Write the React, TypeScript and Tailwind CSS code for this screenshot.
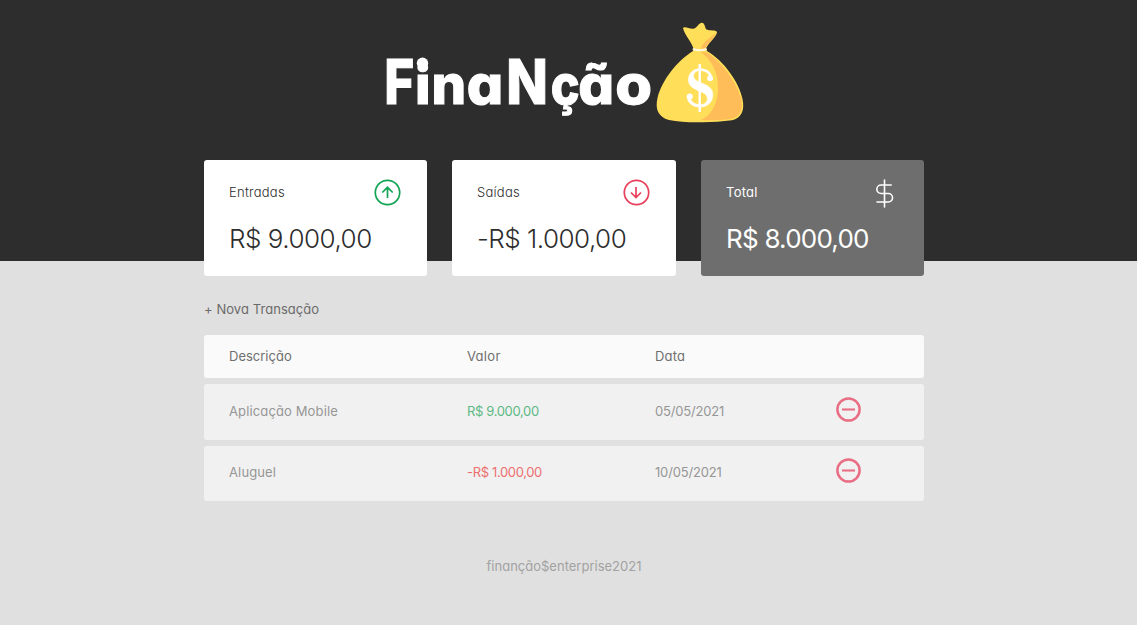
import type { ReactNode } from "react";

const letters = [
  { char: "F", x: 384.3, size: 62.5, stretch: 0.82 },
  { char: "i", x: 415, size: 54, stretch: 1.02 },
  { char: "n", x: 431.6, size: 54, stretch: 1.01 },
  { char: "a", x: 466.8, size: 54, stretch: 1.06 },
  { char: "N", x: 506.2, size: 62.5, stretch: 0.87 },
  { char: "ç", x: 550.8, size: 54, stretch: 0.9 },
  { char: "ã", x: 578.3, size: 54, stretch: 1.04 },
  { char: "o", x: 615.3, size: 54, stretch: 1.1 },
];

function Logo() {
  return (
    <svg width="372" height="110" viewBox="380 17 372 110" className="block" role="img" aria-label="FinaNção">
      <g className="font-[Inter] font-extrabold [font-feature-settings:'cv11','ss03']" fill="#fff" stroke="#fff" strokeWidth="1">
        {letters.map((l) => (
          <text key={l.char} fontSize={l.size} transform={`translate(${l.x} 103.700) scale(${l.stretch} 1)`}>{l.char}</text>
        ))}
      </g>
      <circle cx="422.500" cy="63.300" r="5.700" fill="#fff" />
      <path d="M683 28C684.500 25.800 689 29 693 28.800C697 28.500 698.500 22.800 702 22.800C704.500 22.800 705 27 706 29.300C709 31.200 717 29.500 717 32.500C715.500 38 709 42 706 48.500L707 51C724 61 739 82 742.500 99C745 111 741 118 732 120.200Q716 122.500 700 122.300Q682 122.500 669 120C658 117 655 109 657.500 98C662 80 677 61 693 51L693.500 48.500C691 41 684.500 35 683 28Z" fill="#ffde59" />
      <path d="M716.500 33C714 39 708 42 705.500 48.500L701 48.500C703 41 711 37 716.500 33Z" fill="#ffbd59" />
      <path d="M700 51.500L707 52.500C723 63 737.500 84 741.200 99C743.500 110 740 117 731 119Q716 121 701 120C711 116 717.500 103 718 90C718.500 72 712 60 700 51.500Z" fill="#ffbd59" />
      <path d="M693.500 49.300Q700 51.300 706 49.300" fill="none" stroke="#fff8e5" strokeWidth="2" strokeLinecap="round" />
      <path d="M699.700 64V112" stroke="#fff" strokeWidth="2.400" />
      <path d="M712.500 80H709.800C710 73 705.500 70.600 700 70.600C696 70.600 693.500 73 693.500 76C693.500 84.500 712.800 82 712.800 94.500C712.800 102.500 707 107 700 107C692 107 687.500 102.500 687 96H690C690 101 694 104.700 700 104.700C705 104.700 707.500 102 707.500 98.500C707.500 89.500 688.500 92 688.500 80C688.500 73 693.500 68.700 700 68.700C707.500 68.700 712 72.500 712.500 80Z" fill="#fff" stroke="#fff" strokeWidth="0.700" />
      <circle cx="710" cy="78.300" r="2.800" fill="#fff" />
      <circle cx="689.800" cy="96.500" r="3" fill="#fff" />
    </svg>
  );
}

function ArrowIcon({ down = false }: { down?: boolean }) {
  return (
    <svg width="27" height="27" viewBox="0 0 27 27" fill="none" stroke={down ? "#e83f5b" : "#12a454"} strokeWidth="1.700" className="-mt-[1px]">
      <circle cx="13.500" cy="13.500" r="12.200" />
      <path strokeWidth="1.700" d={down ? "M13 8V18.500M8 13.500L13 18.500L18 13.500" : "M13.500 19V8.500M8.300 13.500L13.500 8.300L18.700 13.500"} />
    </svg>
  );
}

function DollarIcon() {
  return (
    <svg width="27" height="29" viewBox="0 0 27 29" fill="none" stroke="#fff" strokeWidth="1.600" strokeLinecap="round" strokeLinejoin="round">
      <path d="M13.500 1V28M20.200 6H10.100A4.200 4.200 0 0 0 10.100 14.500H17.300A4.200 4.200 0 0 1 17.300 23H6" />
    </svg>
  );
}

function MinusIcon() {
  return (
    <svg width="25" height="25" viewBox="0 0 25 25" fill="none" stroke="#e96e84" className="-mt-[5px]">
      <circle cx="12.500" cy="12.500" r="11.100" strokeWidth="2.500" />
      <path d="M6 12.500H19" strokeWidth="2.100" />
    </svg>
  );
}

type CardProps = { title: string; amount: ReactNode; icon: ReactNode; tone: string; titleClass: string; amountClass: string };

function Card({ title, amount, icon, tone, titleClass, amountClass }: CardProps) {
  return (
    <section className={`h-[116px] rounded-[3px] pl-[25px] pr-[26px] pt-[18px] ${tone}`}>
      <div className="flex h-[30px] items-center justify-between">
        <h3 className={`text-[13px] tracking-[0.25px] ${titleClass}`}>{title}</h3>
        {icon}
      </div>
      <p className={`mt-[12px] text-[26px] leading-[38px] whitespace-nowrap ${amountClass}`}>{amount}</p>
    </section>
  );
}

const rows = [
  { name: "Aplicação Mobile", value: "R$ 9.000,00", date: "05/05/2021", height: "h-[56px]", color: "text-[#5cb985]" },
  { name: "Aluguel", value: "-R$ 1.000,00", date: "10/05/2021", height: "h-[55px] pb-[1px]", color: "text-[#ed6f70]" },
];

export default function App() {
  return (
    <div className="min-h-[625px] bg-[#e0e0e0] font-[Inter,'Open_Sans',sans-serif] text-[13px] [font-feature-settings:'cv11']">
      <header className="flex h-[261px] justify-center bg-[#2d2d2d] pt-[17px] pr-[5px]">
        <Logo />
      </header>
      <main className="ml-[204px] w-[720px]">
        <div className="relative -mt-[101px] grid grid-cols-[223px_224px_223px] gap-[25px]">
          <Card title="Entradas" amount="R$ 9.000,00" icon={<ArrowIcon />} tone="bg-white text-[#2d2d2d]" titleClass="font-light" amountClass="font-light tracking-[-0.500px]" />
          <Card title="Saídas" amount="-R$ 1.000,00" icon={<ArrowIcon down />} tone="bg-white text-[#2d2d2d]" titleClass="font-light" amountClass="font-light tracking-[-0.500px]" />
          <Card title="Total" amount="R$ 8.000,00" icon={<DollarIcon />} tone="bg-[#6e6e6e] text-white" titleClass="font-normal" amountClass="font-normal tracking-[-0.780px]" />
        </div>
        <div className="mt-[24px] flex h-5 items-center tracking-[0.06px] text-[#6b6b6b]">
          <span>+ Nova Transação</span>
        </div>
        <div className="mt-[15px] flex flex-col gap-[6px]">
          <div className="grid h-[43px] grid-cols-[238px_188px_181px] items-center rounded-[3px] bg-[#fafafa] pl-[25px] text-[#6f6f6f]">
            <span>Descrição</span>
            <span className="tracking-[0.300px]">Valor</span>
            <span className="tracking-[0.200px]">Data</span>
          </div>
          {rows.map((row) => (
            <div key={row.name} className={`grid grid-cols-[238px_188px_181px_25px] items-center rounded-[3px] bg-[#f1f1f1] pl-[25px] text-[#969696] ${row.height}`}>
              <span className="tracking-[0.130px]">{row.name}</span>
              <span className={`tracking-[-0.350px] ${row.color}`}>{row.value}</span>
              <span className="tracking-[-0.180px]">{row.date}</span>
              <MinusIcon />
            </div>
          ))}
        </div>
        <footer className="mt-[55px] text-center leading-5 text-[#a2a2a2]">
          <span>finanção$enterprise2021</span>
        </footer>
      </main>
    </div>
  );
}
